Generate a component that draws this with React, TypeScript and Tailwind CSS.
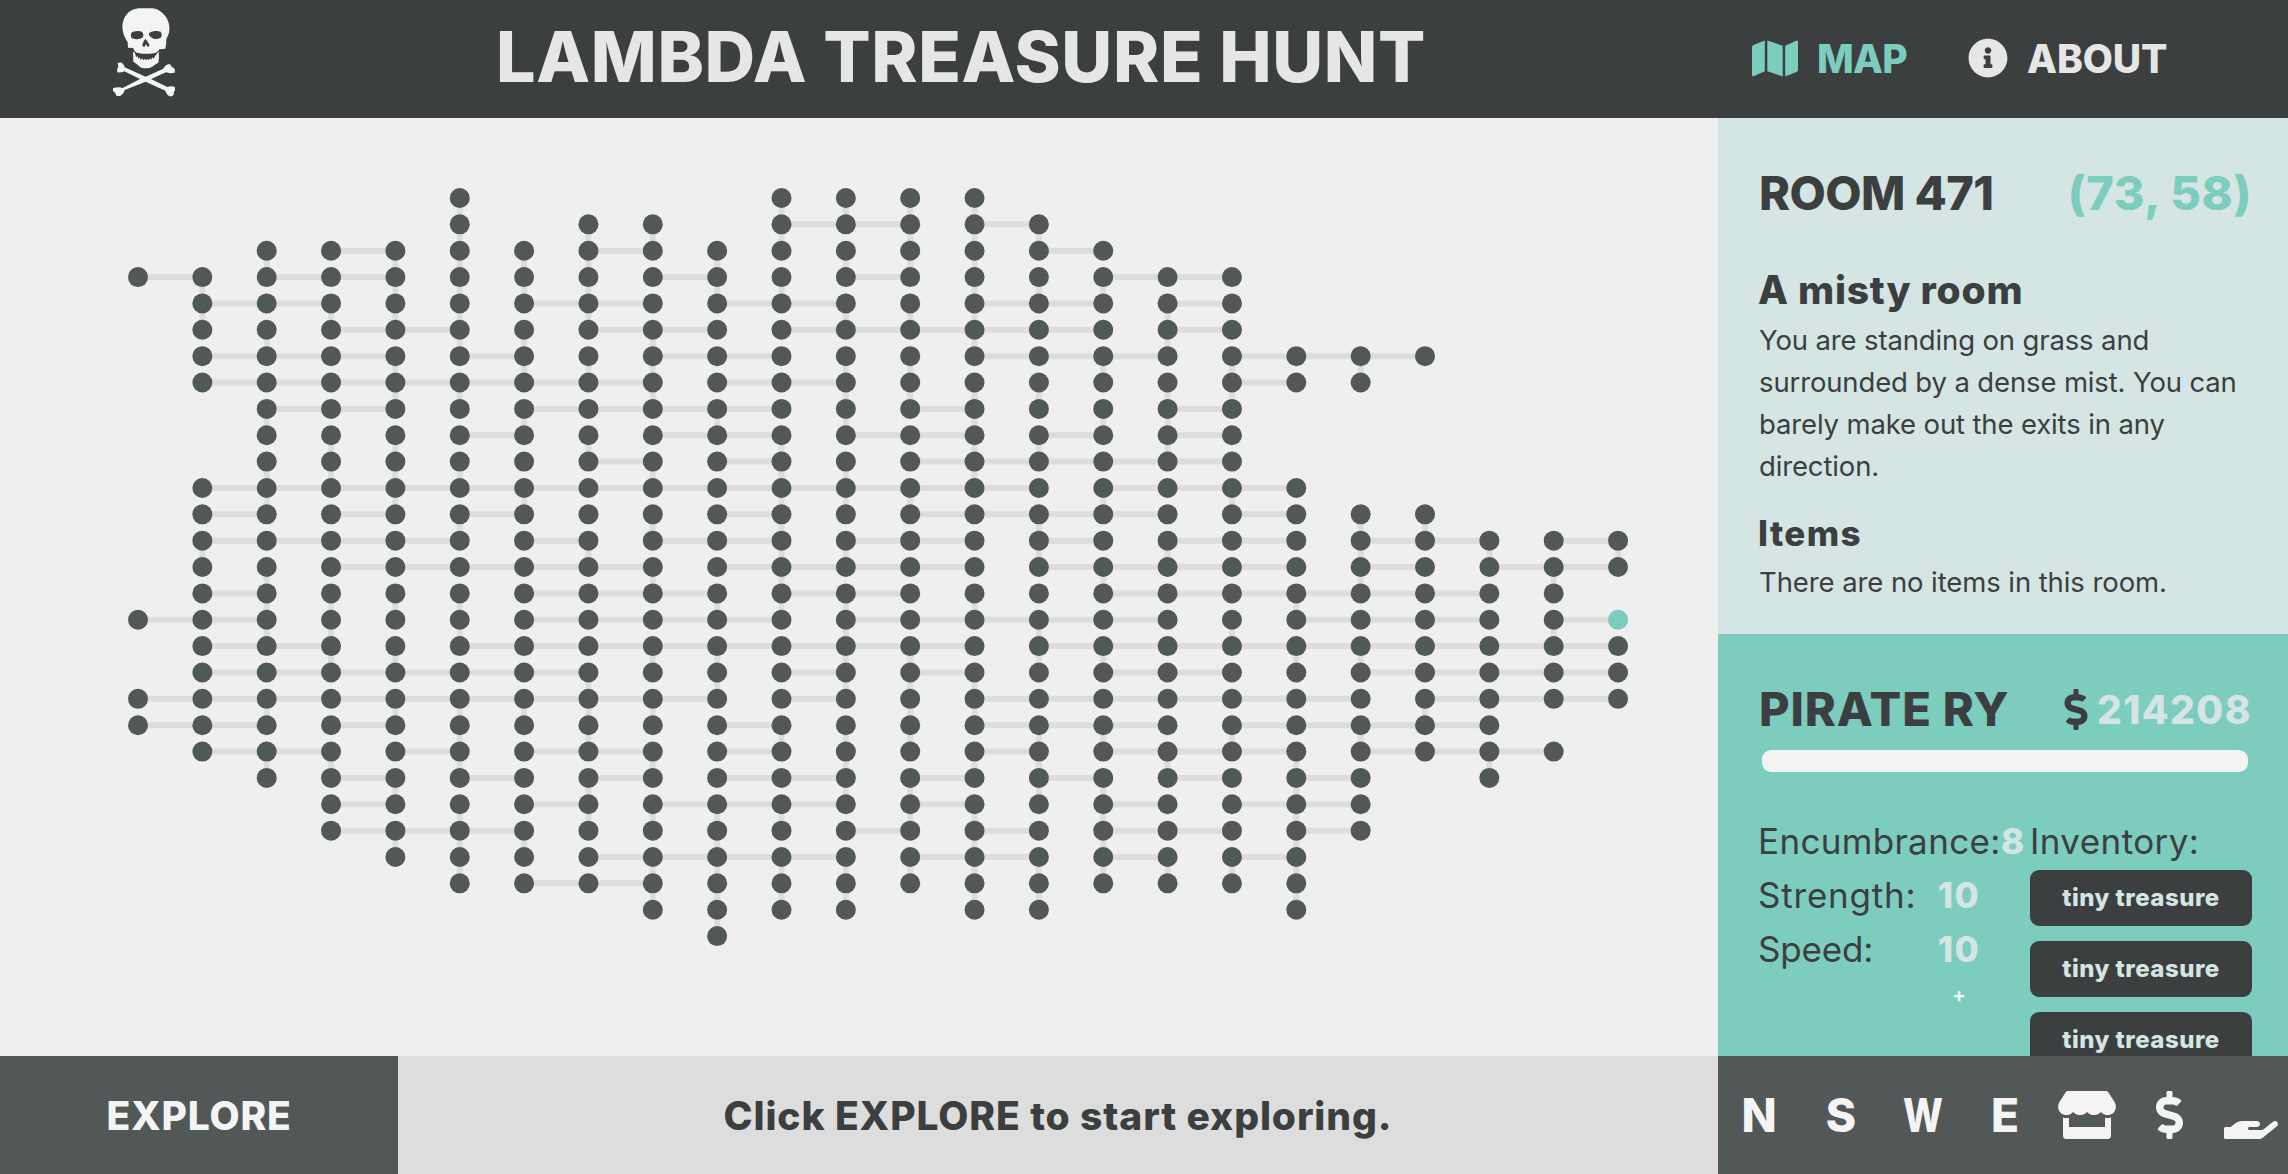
import { FaDollarSign, FaHandHolding, FaInfoCircle, FaMap, FaStore } from 'react-icons/fa';

type Span = [number, number];

/* Rooms per column: inclusive row spans. */
const ROOMS: Span[][] = [
  [[3, 3], [16, 16], [19, 20]],
  [[3, 7], [11, 21]],
  [[2, 22]],
  [[2, 24]],
  [[2, 25]],
  [[0, 26]],
  [[2, 26]],
  [[1, 26]],
  [[1, 27]],
  [[2, 28]],
  [[0, 27]],
  [[0, 27]],
  [[0, 26]],
  [[0, 27]],
  [[1, 27]],
  [[2, 26]],
  [[3, 26]],
  [[3, 26]],
  [[6, 7], [11, 27]],
  [[6, 7], [12, 24]],
  [[6, 6], [12, 21]],
  [[13, 22]],
  [[13, 19], [21, 21]],
  [[13, 14], [16, 19]],
];

/* East-west passages per row: column spans. */
const EAST_WEST: Span[][] = [
  [],
  [[10, 12], [13, 14]],
  [[3, 4], [7, 8], [14, 15]],
  [[0, 1], [2, 4], [8, 9], [11, 12], [15, 17]],
  [[1, 3], [6, 8], [9, 11], [13, 15], [16, 17]],
  [[3, 5], [7, 9], [10, 15], [16, 17]],
  [[1, 4], [5, 6], [8, 10], [13, 16], [17, 20]],
  [[1, 8], [9, 11], [17, 18]],
  [[2, 4], [6, 10], [12, 13], [16, 17]],
  [[5, 6], [8, 10], [11, 13], [14, 15], [16, 17]],
  [[7, 8], [9, 10], [12, 17]],
  [[1, 14], [15, 18]],
  [[1, 2], [3, 4], [5, 6], [9, 10], [12, 16], [17, 18]],
  [[1, 5], [6, 7], [8, 10], [11, 13], [14, 15], [16, 18], [19, 21], [22, 23]],
  [[3, 8], [9, 13], [14, 18], [19, 20], [21, 23]],
  [[1, 2], [6, 9], [10, 12], [15, 21]],
  [[0, 2], [6, 10], [11, 16], [18, 21], [22, 23]],
  [[1, 3], [5, 13], [14, 23]],
  [[1, 7], [10, 11], [12, 13], [15, 17], [19, 23]],
  [[0, 9], [10, 11], [13, 19], [20, 23]],
  [[0, 2], [3, 4], [9, 10], [13, 16], [17, 21]],
  [[1, 3], [4, 5], [6, 8], [9, 10], [13, 14], [15, 18], [19, 22]],
  [[3, 4], [5, 6], [7, 8], [9, 11], [12, 13], [14, 15], [16, 17], [18, 19]],
  [[3, 4], [6, 7], [8, 11], [12, 13], [15, 16], [17, 19]],
  [[3, 6], [11, 12], [13, 14], [15, 17], [18, 19]],
  [[7, 11], [12, 14], [15, 16], [17, 18]],
  [[6, 8]],
];

/* North-south passages per column: row spans. */
const NORTH_SOUTH: Span[][] = [
  [],
  [[3, 5], [13, 14]],
  [[2, 3], [5, 6], [8, 9], [10, 12], [14, 17], [19, 20], [21, 22]],
  [[4, 5], [9, 11], [15, 18], [21, 22]],
  [[2, 5], [6, 8], [9, 12], [15, 16], [17, 18], [19, 20], [22, 23], [24, 25]],
  [[0, 6], [7, 8], [10, 11], [12, 13], [15, 17], [19, 22], [23, 26]],
  [[2, 4], [5, 7], [8, 9], [11, 12], [19, 20], [24, 25]],
  [[1, 5], [6, 7], [9, 10], [13, 14], [18, 21], [22, 24]],
  [[1, 2], [5, 8], [10, 11], [12, 13], [14, 15], [17, 18], [19, 20], [21, 22], [23, 24], [25, 27]],
  [[2, 4], [8, 9], [15, 16], [17, 19], [23, 28]],
  [[0, 2], [3, 4], [9, 16], [20, 21], [23, 24], [25, 27]],
  [[0, 1], [2, 3], [4, 5], [6, 9], [10, 12], [13, 14], [15, 19], [20, 23], [25, 27]],
  [[0, 3], [4, 5], [6, 8], [11, 12], [17, 21], [22, 24], [25, 26]],
  [[0, 6], [7, 11], [15, 16], [18, 20], [21, 22], [23, 27]],
  [[1, 2], [3, 4], [7, 8], [9, 10], [12, 14], [16, 18], [20, 23], [25, 27]],
  [[3, 4], [6, 7], [8, 9], [11, 12], [14, 15], [17, 18], [20, 21], [22, 26]],
  [[4, 6], [7, 10], [13, 14], [21, 22], [25, 26]],
  [[6, 8], [11, 12], [16, 17], [20, 21], [25, 26]],
  [[15, 16], [17, 18], [21, 27]],
  [[6, 7], [12, 15], [17, 18], [20, 21]],
  [[12, 13], [19, 20]],
  [[13, 14], [21, 22]],
  [[14, 15], [16, 17]],
  [[13, 14]],
];

const px = (col: number) => 138 + col * 64.35;
const py = (row: number) => 80 + row * 26.36;
const CURRENT = { col: 23, row: 16 };

function WorldMap() {
  return (
    <svg className="block h-full w-full" viewBox="0 0 1718 938">
      <g stroke="#dddddd" strokeWidth="6">
        {EAST_WEST.flatMap((spans, row) =>
          spans.map(([a, b]) => <line key={`h${row}-${a}`} x1={px(a)} x2={px(b)} y1={py(row)} y2={py(row)} />),
        )}
        {NORTH_SOUTH.flatMap((spans, col) =>
          spans.map(([a, b]) => <line key={`v${col}-${a}`} x1={px(col)} x2={px(col)} y1={py(a)} y2={py(b)} />),
        )}
      </g>
      {ROOMS.flatMap((spans, col) =>
        spans.flatMap(([a, b]) =>
          Array.from({ length: b - a + 1 }, (_, i) => a + i).map((row) => (
            <circle
              key={`${col}-${row}`}
              cx={px(col)}
              cy={py(row)}
              r="10"
              fill={col === CURRENT.col && row === CURRENT.row ? '#7dcdbe' : '#525857'}
            />
          )),
        ),
      )}
    </svg>
  );
}

function Skull({ className }: { className?: string }) {
  return (
    <svg className={className} viewBox="24 20 192 270" fill="#f4f4f4">
      <path
        fillRule="evenodd"
        d="M103 24H147C160 26 172 33 181 44C190 54 195 66 196 80C197 92 195 100 191 108C187 114 186 120 187 128L184 145L166 147C163 153 159 156 153 158L138 160H116L98 157C92 154 89 149 88 143L72 142L71 125C66 118 61 110 58 98C54 84 54 72 58 61C63 44 75 32 90 27Z
        M82 98C86 91 108 90 114 95C119 100 120 107 115 112C106 117 92 118 84 114C80 110 80 104 82 98Z
        M136 98C145 91 161 91 170 94C174 100 174 107 170 112C161 117 150 117 144 112C138 109 132 103 136 98Z
        M124 116C129 121 134 128 137 136L131 140L126 132L121 140L115 137C116 128 119 121 124 116Z"
      />
      <path d="M87 154L93 158L96 170L101 168L103 176L107 171L110 179L114 174L118 180L122 175L126 180L130 175L134 180L138 174L142 178L145 171L149 175L154 166L164 153L165 172L163 187C157 190 152 193 148 197C140 203 132 204 122 204C112 203 106 200 101 193L88 184Z" />
      <path d="M41 188L50 186C57 189 61 195 62 201L125 229L178 205C181 198 188 192 197 191C200 194 203 197 204 201C209 202 212 205 213 210L212 217C203 219 194 219 186 216L141 236L190 260C198 257 206 257 213 260V270C210 273 209 278 209 283L204 288H196C190 284 186 278 184 271L125 244L62 269C60 277 55 284 48 287H38L32 276L27 272V264C37 260 47 260 56 263L108 236L61 213C54 217 47 217 40 216L39 207L43 200Z" />
    </svg>
  );
}

const INVENTORY = ['tiny treasure', 'tiny treasure', 'tiny treasure'];

function Stat({ label, value, tracking }: { label: string; value: string; tracking: string }) {
  return (
    <div className="flex h-[54px] w-[268px] items-center whitespace-nowrap text-[35px]">
      <span className={`min-w-[160px] shrink-0 ${tracking}`}>{label}</span>
      <span className="flex shrink basis-[82px] justify-center text-[35px] font-extrabold tracking-[1.5px] text-[#d4e5e3]">{value}</span>
    </div>
  );
}

export default function App() {
  return (
    <div className="flex h-screen w-full flex-col overflow-hidden bg-[#efefef] font-['Inter',sans-serif] text-[#3c3f40]">
      <header className="flex h-[118px] shrink-0 items-center whitespace-nowrap bg-[#3c3f40] text-[#e6e6e6]">
        <Skull className="mb-[14px] ml-[112px] h-[90px] w-[64px] shrink-0" />
        <h1 className="mb-[4px] ml-[320px] w-[1256px] shrink-0 text-[70px] font-extrabold leading-none tracking-[0.65px]">
          LAMBDA TREASURE HUNT
        </h1>
        <nav className="mb-[2px] flex items-center text-[39px] font-extrabold leading-none">
          <a className="flex items-center text-[#7dcdbe]">
            <FaMap className="h-[41px] w-[46px]" />
            <span className="ml-[19px] w-[91px] tracking-[-0.8px]">MAP</span>
          </a>
          <a className="ml-[60px] flex items-center">
            <FaInfoCircle className="h-[40px] w-[40px]" />
            <span className="ml-[19px] tracking-[-0.1px]">ABOUT</span>
          </a>
        </nav>
      </header>

      <div className="flex min-h-0 flex-1">
        <main className="w-[1718px] shrink-0">
          <WorldMap />
        </main>
        <aside className="flex flex-1 flex-col overflow-hidden">
          <section className="h-[516px] shrink-0 bg-[#d4e5e3] pl-10 pr-9 pt-[51px]">
            <div className="flex h-12 items-center justify-between whitespace-nowrap text-[47px] font-extrabold">
              <h2 className="ml-px tracking-[-0.6px]">ROOM 471</h2>
              <span className="tracking-[0.6px] text-[#7dcdbe]">(73, 58)</span>
            </div>
            <h3 className="mt-[49px] h-12 text-[39px] font-extrabold leading-[48px] tracking-[0.75px]">A misty room</h3>
            <p className="ml-px mt-[5px] whitespace-nowrap text-[27.5px] leading-[42px] tracking-[-0.14px]">
              You are standing on grass and
              <br />
              surrounded by a dense mist. You can
              <br />
              barely make out the exits in any
              <br />
              direction.
            </p>
            <h4 className="mt-[25px] text-[35px] font-extrabold leading-[43px] tracking-[1.4px]">Items</h4>
            <p className="ml-px mt-[6px] text-[27.5px] leading-[42px] tracking-[-0.09px]">There are no items in this room.</p>
          </section>

          <section className="min-h-0 flex-1 overflow-hidden bg-[#7dcdbe] pl-10 pr-9 pt-[51px]">
            <div className="flex h-12 items-center justify-between whitespace-nowrap">
              <h2 className="ml-px text-[47px] font-extrabold tracking-[0.85px]">PIRATE RY</h2>
              <div className="flex items-center">
                <FaDollarSign className="h-[41px] w-[24px]" />
                <span className="ml-[9px] text-[39px] font-extrabold leading-none tracking-[1.4px] text-[#d4e5e3]">214208</span>
              </div>
            </div>
            <div className="mx-1 mt-[17px] h-[22px] rounded-[9px] bg-[#f3f3f3]" />
            <div className="mt-[42px] flex justify-between">
              <div>
                <Stat label="Encumbrance:" value="8" tracking="tracking-[0.35px]" />
                <Stat label="Strength:" value="10" tracking="tracking-[0.8px]" />
                <Stat label="Speed:" value="10" tracking="tracking-[-0.2px]" />
                <div className="-mt-px ml-[160px] flex h-10 w-[82px] items-center justify-center text-[20px] font-bold text-[#f4f4f4]">
                  +
                </div>
              </div>
              <div className="w-[222px]">
                <div className="h-[54px] text-[35px] leading-[54px] tracking-[0.4px]">Inventory:</div>
                <div className="mt-[2px] flex flex-col gap-[15px]">
                  {INVENTORY.map((name, i) => (
                    <button
                      key={i}
                      className="h-14 shrink-0 rounded-[9px] bg-[#3c3f40] text-[24px] font-extrabold tracking-[0.5px] text-[#d4e5e3]"
                    >
                      {name}
                    </button>
                  ))}
                </div>
              </div>
            </div>
          </section>
        </aside>
      </div>

      <footer className="flex h-[118px] shrink-0 whitespace-nowrap text-[39px] font-extrabold">
        <button className="w-[398px] shrink-0 bg-[#525857] pt-[2px] tracking-[0.8px] text-[#f4f4f4]">EXPLORE</button>
        <div className="flex w-[1320px] shrink-0 items-center justify-center bg-[#dddddd] pt-[2px] tracking-[0.9px]">
          Click EXPLORE to start exploring.
        </div>
        <div className="flex flex-1 items-center overflow-hidden bg-[#525857] text-[46px] font-extrabold text-[#f4f4f4] [&>*]:w-[82px] [&>*]:shrink-0">
          <button>N</button>
          <button>S</button>
          <button className="scale-x-[0.82]">W</button>
          <button>E</button>
          <button className="flex justify-center">
            <FaStore className="h-[48px] w-[58px]" />
          </button>
          <button className="flex justify-center">
            <FaDollarSign className="h-[48px] w-[27px]" />
          </button>
          <button className="flex justify-center">
            <FaHandHolding className="h-[48px] w-[54px]" />
          </button>
        </div>
      </footer>
    </div>
  );
}
